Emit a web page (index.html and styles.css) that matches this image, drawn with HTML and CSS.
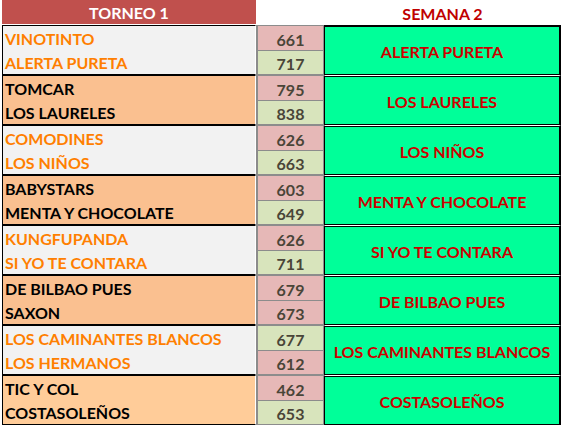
FILE: index.html
```html
<!DOCTYPE html>
<html>
<head>
<meta charset="utf-8">
<link rel="stylesheet" href="styles.css">
</head>
<body>
<div class="sheet">
  <div class="hdr-left">TORNEO 1</div>
  <div class="hdr-mid"></div>
  <div class="hdr-right">SEMANA 2</div>

  <div class="name a top">VINOTINTO</div>
  <div class="score pink top">661</div>
  <div class="match">ALERTA PURETA</div>
  <div class="name a">ALERTA PURETA</div>
  <div class="score green">717</div>

  <div class="name b top">TOMCAR</div>
  <div class="score pink top">795</div>
  <div class="match">LOS LAURELES</div>
  <div class="name b">LOS LAURELES</div>
  <div class="score green">838</div>

  <div class="name a top">COMODINES</div>
  <div class="score pink top">626</div>
  <div class="match">LOS NIÑOS</div>
  <div class="name a">LOS NIÑOS</div>
  <div class="score green">663</div>

  <div class="name b top">BABYSTARS</div>
  <div class="score pink top">603</div>
  <div class="match">MENTA Y CHOCOLATE</div>
  <div class="name b">MENTA Y CHOCOLATE</div>
  <div class="score green">649</div>

  <div class="name a top">KUNGFUPANDA</div>
  <div class="score pink top">626</div>
  <div class="match">SI YO TE CONTARA</div>
  <div class="name a">SI YO TE CONTARA</div>
  <div class="score green">711</div>

  <div class="name b top">DE BILBAO PUES</div>
  <div class="score pink top">679</div>
  <div class="match">DE BILBAO PUES</div>
  <div class="name b">SAXON</div>
  <div class="score pink">673</div>

  <div class="name a top">LOS CAMINANTES BLANCOS</div>
  <div class="score green top">677</div>
  <div class="match">LOS CAMINANTES BLANCOS</div>
  <div class="name a">LOS HERMANOS</div>
  <div class="score pink">612</div>

  <div class="name c top">TIC Y COL</div>
  <div class="score pink top">462</div>
  <div class="match">COSTASOLEÑOS</div>
  <div class="name c">COSTASOLEÑOS</div>
  <div class="score green">653</div>
</div>
</body>
</html>
```
FILE: styles.css
```css
html, body {
  margin: 0;
  padding: 0;
  background: #ffffff;
}
body {
  font-family: Lato, "Open Sans", sans-serif;
  font-weight: 700;
  font-size: 16px;
}
.sheet {
  display: grid;
  grid-template-columns: 254px 68px 237px;
  grid-template-rows: 25px;
  grid-auto-rows: 25px;
  margin-left: 2px;
  width: 559px;
  border-right: 1px solid #dde4ee;
}
.hdr-left {
  background: #c0504d;
  color: #ffffff;
  display: flex;
  align-items: center;
  justify-content: center;
  height: 24px;
  padding-top: 1px;
  box-sizing: border-box;
}
.hdr-mid {
  background: #ffffff;
}
.hdr-right {
  color: #c00000;
  display: flex;
  align-items: center;
  justify-content: center;
  background: #ffffff;
  padding-top: 1px;
}
.name {
  box-sizing: border-box;
  border-left: 1px solid #000;
  border-right: 1px solid #ffffff;
  border-bottom: 1px solid #8c8c8c;
  display: flex;
  align-items: center;
  padding-left: 2px;
  padding-top: 2px;
  white-space: nowrap;
}
.name.top {
  border-top: 1px solid #000;
}
.name:not(.top) {
  border-bottom: 1px solid #000;
  margin-top: -1px;
  height: 26px;
}
.name.a {
  background: #f2f2f2;
  color: #ff7f00;
}
.name.b {
  background: #fac090;
  color: #000;
}
.name.c {
  background: #ffcc99;
  color: #000;
}
.score {
  box-sizing: border-box;
  border: 1px solid #8c8c8c;
  border-left: 2px solid #8c8c8c;
  display: flex;
  align-items: center;
  justify-content: center;
  padding-top: 2px;
  color: #4a4538;
}
.score.top {
  border-bottom: none;
}
.pink { background: #e6b8b7; }
.green { background: #d8e4bc; }
.match {
  grid-row: span 2;
  box-sizing: border-box;
  background: #00ff99;
  border: 1px solid #000;
  border-right-width: 2px;
  border-top: 1px solid #ffffff;
  box-shadow: inset 0 1px 0 #000;
  color: #cc0000;
  display: flex;
  align-items: center;
  justify-content: center;
  padding-top: 2px;
  white-space: nowrap;
}
.sheet > .match:nth-child(6) {
  border-top-color: #000;
}
```
